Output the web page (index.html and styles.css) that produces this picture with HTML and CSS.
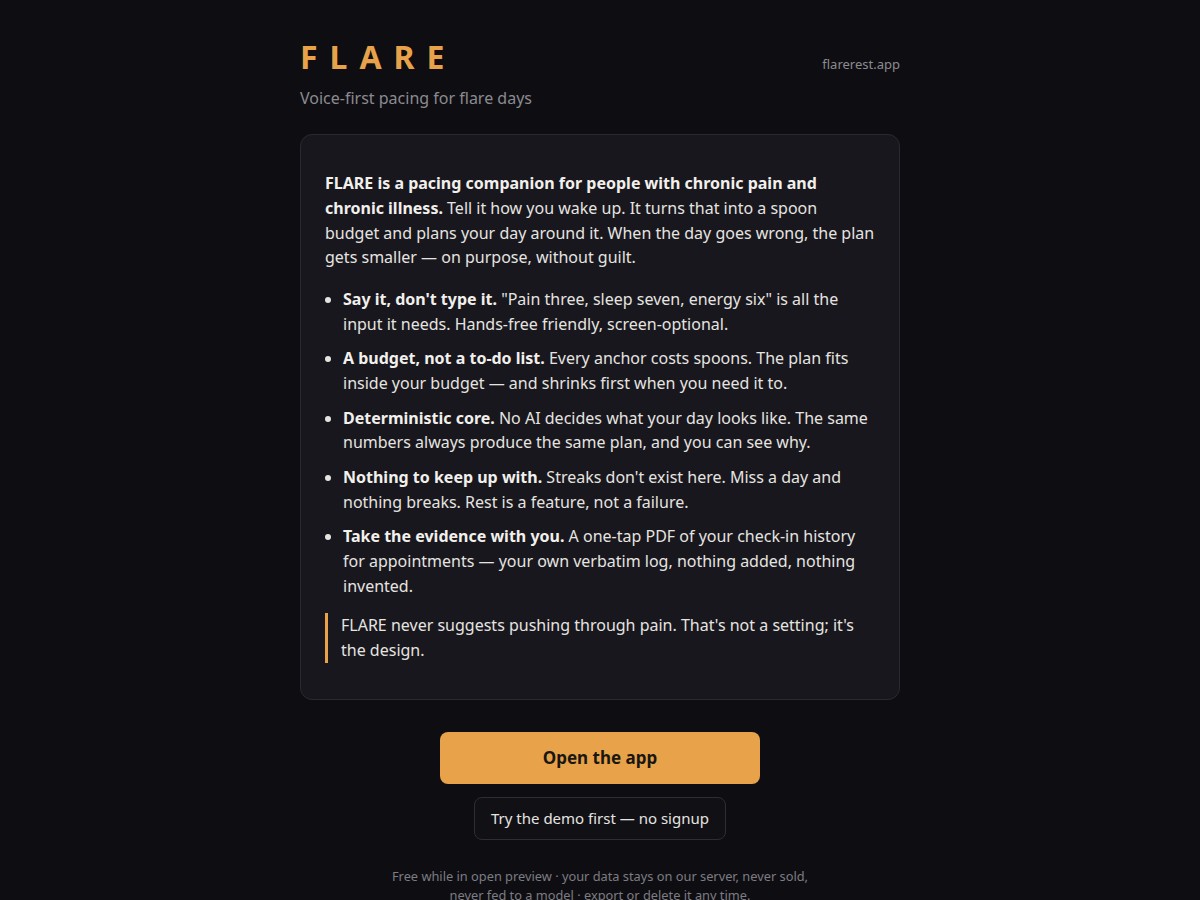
FILE: index.html
```html
<!DOCTYPE html>
<html lang="en">
<head>
  <meta charset="UTF-8">
  <meta name="viewport" content="width=device-width, initial-scale=1.0">
  <title>FLARE</title>
  <link rel="stylesheet" href="styles.css">
</head>
<body>
  <main class="page">
    <header class="top">
      <div class="brand-row">
        <h1 class="brand">FLARE</h1>
        <span class="domain">flarerest.app</span>
      </div>
      <p class="tagline">Voice-first pacing for flare days</p>
    </header>

    <section class="card">
      <p><strong>FLARE is a pacing companion for people with chronic pain and chronic illness.</strong> Tell it how you wake up. It turns that into a spoon budget and plans your day around it. When the day goes wrong, the plan gets smaller — on purpose, without guilt.</p>
      <ul class="points">
        <li><strong>Say it, don't type it.</strong> "Pain three, sleep seven, energy six" is all the input it needs. Hands-free friendly, screen-optional.</li>
        <li><strong>A budget, not a to-do list.</strong> Every anchor costs spoons. The plan fits inside your budget — and shrinks first when you need it to.</li>
        <li><strong>Deterministic core.</strong> No AI decides what your day looks like. The same numbers always produce the same plan, and you can see why.</li>
        <li><strong>Nothing to keep up with.</strong> Streaks don't exist here. Miss a day and nothing breaks. Rest is a feature, not a failure.</li>
        <li><strong>Take the evidence with you.</strong> A one-tap PDF of your check-in history for appointments — your own verbatim log, nothing added, nothing invented.</li>
      </ul>
      <blockquote class="promise">FLARE never suggests pushing through pain. That's not a setting; it's the design.</blockquote>
    </section>

    <div class="actions">
      <a class="btn btn-primary" href="#">Open the app</a>
      <a class="btn btn-ghost" href="#">Try the demo first — no signup</a>
    </div>

    <p class="fine">Free while in open preview · your data stays on our server, never sold, never fed to a model · export or delete it any time.</p>
  </main>
</body>
</html>
```

FILE: styles.css
```css
html, body {
  background: #0e0e12;
}
body {
  margin: 0;
  font-family: "Noto Sans", "Open Sans", sans-serif;
  color: #e6e4e0;
}
.page {
  width: 600px;
  margin: 0 auto;
  padding: 38px 0 40px;
}

.brand-row {
  display: flex;
  justify-content: space-between;
  align-items: baseline;
}
.brand {
  margin: 0;
  font-size: 32px;
  line-height: 38px;
  font-weight: 700;
  letter-spacing: 12px;
  color: #e8a24a;
}
.domain {
  font-size: 13px;
  color: #8b8a90;
}
.tagline {
  margin: 10px 0 0;
  font-size: 16px;
  line-height: 24px;
  color: #8b8a90;
}

.card {
  margin-top: 24px;
  background: #18171d;
  border: 1px solid #2a2930;
  border-radius: 12px;
  padding: 36px 24px;
  font-size: 16px;
  line-height: 1.55;
}
.card p {
  margin: 0;
}
.card strong {
  font-weight: 700;
  color: #f2f0ec;
}
.points {
  margin: 17px 0 15px;
  padding-left: 18px;
}
.points li + li {
  margin-top: 0.6em;
}
.promise {
  margin: 0;
  border-left: 3px solid #e8a24a;
  padding-left: 13px;
}

.actions {
  display: flex;
  flex-direction: column;
  align-items: center;
  gap: 13px;
  margin-top: 32px;
}
.btn {
  display: block;
  text-decoration: none;
  text-align: center;
  border-radius: 8px;
}
.btn-primary {
  width: 320px;
  padding: 13px 0;
  background: #e8a24a;
  color: #1a1712;
  font-size: 17px;
  line-height: 26px;
  font-weight: 700;
}
.btn-ghost {
  padding: 10px 16px;
  border: 1px solid #2e2d34;
  background: #111115;
  color: #e6e4e0;
  font-size: 15px;
  line-height: 21px;
}

.fine {
  width: 430px;
  margin: 27px auto 0;
  text-align: center;
  font-size: 12.8px;
  line-height: 19px;
  color: #7d7c82;
}
```
